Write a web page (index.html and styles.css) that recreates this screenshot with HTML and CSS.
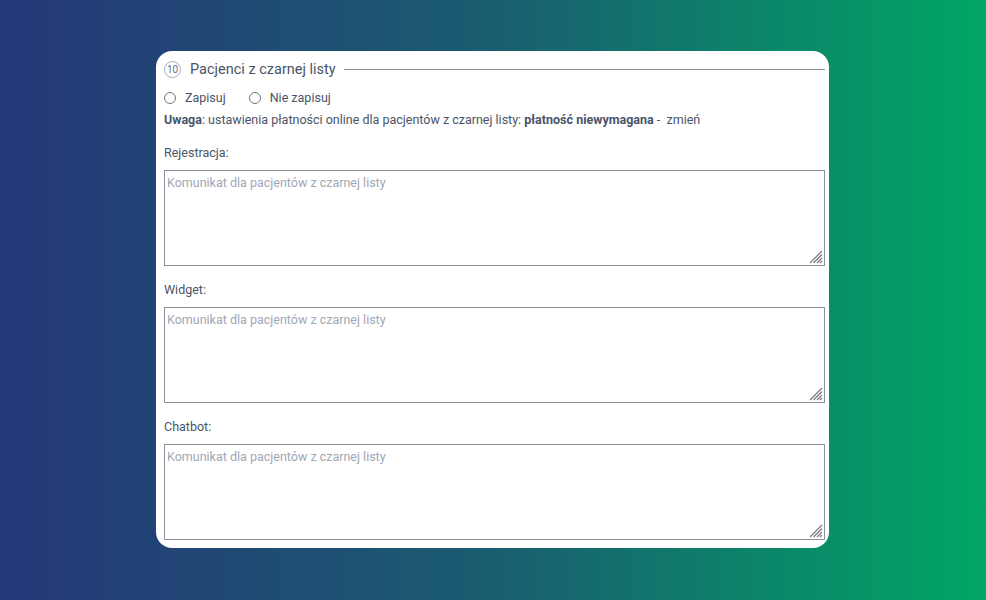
FILE: index.html
```html
<!DOCTYPE html>
<html lang="pl">
<head>
    <meta charset="UTF-8">
    <meta name="viewport" content="width=device-width, initial-scale=1.0">
    <title>Pacjenci z czarnej listy</title>
    <link rel="stylesheet" href="styles.css">
</head>
<body>
    <div class="card">
        <div class="section-title">
            <span class="step">10</span>
            <span class="title-text">Pacjenci z czarnej listy</span>
            <span class="title-line"></span>
        </div>
        <div class="radios">
            <label class="radio"><input type="radio" name="blacklist"> Zapisuj</label>
            <label class="radio"><input type="radio" name="blacklist"> Nie zapisuj</label>
        </div>
        <p class="note"><b>Uwaga</b>: ustawienia płatności online dla pacjentów z czarnej listy: <b>płatność niewymagana</b> -&nbsp; zmień</p>
        <div class="field">
            <label class="field-label">Rejestracja:</label>
            <div class="area">
                <textarea placeholder="Komunikat dla pacjentów z czarnej listy"></textarea>
                <svg class="grip" width="14" height="14" viewBox="0 0 14 14"><path d="M1 13L13 1M4.5 13L13 4.5M8 13L13 8M11 13L13 11" stroke="#7d7d82" stroke-width="1.3"/></svg>
            </div>
        </div>
        <div class="field">
            <label class="field-label">Widget:</label>
            <div class="area">
                <textarea placeholder="Komunikat dla pacjentów z czarnej listy"></textarea>
                <svg class="grip" width="14" height="14" viewBox="0 0 14 14"><path d="M1 13L13 1M4.5 13L13 4.5M8 13L13 8M11 13L13 11" stroke="#7d7d82" stroke-width="1.3"/></svg>
            </div>
        </div>
        <div class="field">
            <label class="field-label">Chatbot:</label>
            <div class="area">
                <textarea placeholder="Komunikat dla pacjentów z czarnej listy"></textarea>
                <svg class="grip" width="14" height="14" viewBox="0 0 14 14"><path d="M1 13L13 1M4.5 13L13 4.5M8 13L13 8M11 13L13 11" stroke="#7d7d82" stroke-width="1.3"/></svg>
            </div>
        </div>
    </div>
</body>
</html>
```

FILE: styles.css
```css
body {
    margin: 0;
    padding: 51px 0 0;
    height: 600px;
    box-sizing: border-box;
    font-family: Roboto, "Liberation Sans", sans-serif;
    background: linear-gradient(to right, #253778 0%, #1a5d70 50%, #00a664 100%);
    overflow: hidden;
}
.card {
    width: 673px;
    margin: 0 0 0 156px;
    box-sizing: border-box;
    background: #fff;
    border-radius: 16px;
    padding: 9px 4px 8px 8px;
    color: #4a5468;
}
.section-title {
    display: flex;
    align-items: center;
    height: 18px;
}
.step {
    width: 15px;
    height: 15px;
    border: 1px solid #a8adb8;
    border-radius: 50%;
    font-size: 10px;
    line-height: 15px;
    text-align: center;
    color: #6b7280;
}
.title-text {
    margin-left: 9px;
    font-size: 14.5px;
}
.title-line {
    flex: 1;
    height: 1px;
    margin-left: 8px;
    background: #8a8f9c;
}
.radios {
    display: flex;
    gap: 23px;
    margin-top: 12px;
    font-size: 12.5px;
}
.radio {
    display: flex;
    align-items: center;
}
.radio input {
    width: 12px;
    height: 12px;
    margin: 0 9px 0 0;
}
.note {
    margin: 7px 0 0;
    font-size: 12.5px;
    line-height: 16px;
}
.note b {
    font-weight: 700;
}
.field {
    margin-top: 17px;
}
.field + .field {
    margin-top: 16px;
}
.field-label {
    display: block;
    font-size: 12.5px;
    line-height: 16px;
    margin-bottom: 9px;
}
.area {
    position: relative;
}
textarea {
    display: block;
    width: 100%;
    height: 96px;
    box-sizing: border-box;
    border: 1px solid #8c8f9c;
    border-radius: 0;
    padding: 4px 2px;
    font-family: Roboto, "Liberation Sans", sans-serif;
    font-size: 12.5px;
    color: #4a5468;
    resize: none;
}
textarea::placeholder {
    color: #a0a7b5;
}
.grip {
    position: absolute;
    right: 2px;
    bottom: 2px;
    pointer-events: none;
}
```
